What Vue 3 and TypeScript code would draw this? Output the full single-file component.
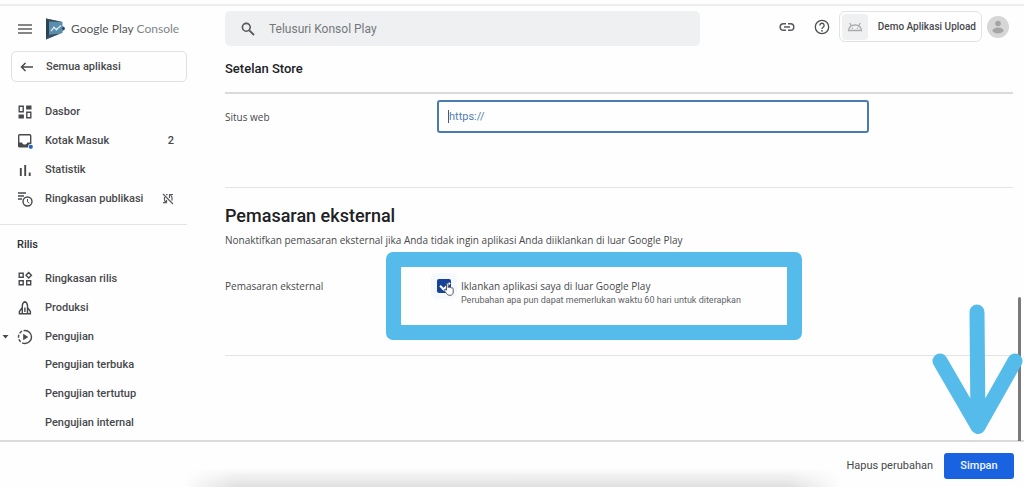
<script setup lang="ts">
import { ref } from 'vue'

interface NavItem {
  label: string
  icon?: string
  count?: number
  muted?: boolean
  open?: boolean
}

const overview: NavItem[] = [
  { label: 'Dasbor', icon: 'dashboard' },
  { label: 'Kotak Masuk', icon: 'inbox', count: 2 },
  { label: 'Statistik', icon: 'stats' },
  { label: 'Ringkasan publikasi', icon: 'publish', muted: true },
]

const release: NavItem[] = [
  { label: 'Ringkasan rilis', icon: 'widgets' },
  { label: 'Produksi', icon: 'production' },
  { label: 'Pengujian', icon: 'testing', open: true },
  { label: 'Pengujian terbuka' },
  { label: 'Pengujian tertutup' },
  { label: 'Pengujian internal' },
]

const query = ref('')
const website = ref('')
const advertise = ref(true)
</script>

<template>
  <div class="page">
    <div class="shell">
      <aside class="sidebar">
        <div class="brand">
          <button class="icon-button" type="button" aria-label="Menu">
            <svg width="14" height="12" viewBox="0 0 14 12"><path d="M0 2h14M0 6h14M0 10h14" stroke="#5c5f62" stroke-width="1.5" /></svg>
          </button>
          <svg width="20" height="22" viewBox="0 0 20 22" aria-hidden="true">
            <path d="M1 0.5L19.5 9v3L1 21.5z" fill="#4d7f9e" />
            <path d="M1 0.5L17.5 4v11L3 17z" fill="#5b8eac" />
            <path d="M1 0.5L4 3v14l-3 4.500z" fill="#2d4350" />
            <path d="M1 21.5L4 17l13-2z" fill="#34505f" />
            <path d="M1 0.5L17.5 4 4 3.500z" fill="#354b58" />
            <path d="M6 13l3-3.500 2.500 2L16 7.500" fill="none" stroke="#d9edf8" stroke-width="1.200" />
            <circle cx="9" cy="9.500" r="1" fill="#d9edf8" /><circle cx="11.500" cy="11.500" r="1" fill="#d9edf8" />
            <circle cx="18.500" cy="10.500" r="1.200" fill="#263b48" />
          </svg>
          <span class="brand-name">Google Play <span>Console</span></span>
        </div>

        <button class="all-apps" type="button">
          <svg width="14" height="12" viewBox="0 0 14 12"><path d="M13 6H1.500M5.500 2l-4 4 4 4" fill="none" stroke="#47494c" stroke-width="1.500" /></svg>
          <span>Semua aplikasi</span>
        </button>

        <nav class="nav">
          <ul class="list overview">
            <li v-for="item in overview" :key="item.label">
              <a class="item" href="#">
                <span class="glyph">
                  <svg v-if="item.icon === 'dashboard'" width="16" height="16" viewBox="0 0 16 16">
                    <path d="M2.200 2.200h4v5.600h-4zM9.800 8.200h4v5.600h-4z" fill="none" stroke="#47494c" stroke-width="1.400" />
                    <path d="M9.100 1.500h5.400v4H9.100zM1.500 10.500h5.400v4H1.500z" fill="#47494c" />
                  </svg>
                  <svg v-else-if="item.icon === 'inbox'" width="16" height="16" viewBox="0 0 16 16">
                    <rect x="1.700" y="1.700" width="12" height="12" rx="1" fill="none" stroke="#47494c" stroke-width="1.400" />
                    <path d="M1.500 9.500h3.500c.5 1.500 1.500 2 2.700 2s2.200-.5 2.700-2h3.500v4.500H1.500z" fill="#47494c" />
                    <circle cx="13.700" cy="13.700" r="2.600" fill="#fefefe" /><circle cx="13.800" cy="13.800" r="2.100" fill="#2065c4" />
                  </svg>
                  <svg v-else-if="item.icon === 'stats'" width="16" height="16" viewBox="0 0 16 16">
                    <path d="M3.800 6v8M8.200 3v11M12.700 10.500V14" stroke="#47494c" stroke-width="1.900" />
                  </svg>
                  <svg v-else width="16" height="16" viewBox="0 0 16 16">
                    <path d="M1 2h8M1 5h6M1 8h4" stroke="#47494c" stroke-width="1.300" />
                    <circle cx="10.500" cy="10.500" r="4.500" fill="none" stroke="#47494c" stroke-width="1.400" />
                    <path d="M10.500 8v2.700l1.700 1.500" fill="none" stroke="#47494c" stroke-width="1" />
                  </svg>
                </span>
                <span class="text">{{ item.label }}</span>
                <span v-if="item.count" class="count">{{ item.count }}</span>
                <svg v-if="item.muted" class="muted" width="12" height="12" viewBox="0 0 12 12">
                  <path d="M1 1l10 10M4 1.700h1.500M2.500 4v3c0 1.500 1 2 2 2.500M1 9.700h3.500V7M7.500 5V1.500H11M8.500 2c1.200.7 1.500 1.500 1.500 3v2.500" fill="none" stroke="#5a5c5f" stroke-width="1.200" />
                </svg>
              </a>
            </li>
          </ul>
          <h3>Rilis</h3>
          <ul class="list release">
            <li v-for="item in release" :key="item.label">
              <a class="item" href="#">
                <svg v-if="item.open" class="caret" width="8" height="4" viewBox="0 0 8 4"><path d="M0.500 0h6L3.500 3.500z" fill="#47494c" /></svg>
                <span class="glyph">
                  <svg v-if="item.icon === 'widgets'" width="16" height="16" viewBox="0 0 16 16">
                    <path d="M2.200 2.200h4v4h-4zM2.200 9.700h4v4h-4zM9.700 9.700h4v4h-4zM11.700 1.500l2.700 2.700-2.700 2.700L9 4.200z" fill="none" stroke="#47494c" stroke-width="1.400" />
                  </svg>
                  <svg v-else-if="item.icon === 'production'" width="16" height="16" viewBox="0 0 16 16">
                    <path d="M5.300 13.500V6c0-2 1-3.500 2.600-4.300C9.500 2.500 10.500 4 10.500 6v7.500M5.300 7.500l-2.900 4v2.200h11v-2.200l-2.900-4M7.900 7.500v4.500" fill="none" stroke="#47494c" stroke-width="1.400" />
                  </svg>
                  <svg v-else-if="item.icon === 'testing'" width="16" height="16" viewBox="0 0 16 16">
                    <path d="M8 1.500a6.500 6.500 0 0 1 0 13" fill="none" stroke="#47494c" stroke-width="1.400" />
                    <path d="M8 14.500a6.500 6.500 0 0 1 0-13" fill="none" stroke="#47494c" stroke-width="1.400" stroke-dasharray="3 1.600" />
                    <path d="M6.200 4.800l5 3.200-5 3.200z" fill="#47494c" />
                  </svg>
                </span>
                <span class="text">{{ item.label }}</span>
              </a>
            </li>
          </ul>
        </nav>
      </aside>

      <main class="main">
        <header class="topbar">
          <label class="search">
            <svg width="14" height="14" viewBox="0 0 14 14" aria-hidden="true"><circle cx="5.300" cy="5.300" r="3.900" fill="none" stroke="#55585b" stroke-width="1.600" /><path d="M8.300 8.300l4.700 4.700" stroke="#55585b" stroke-width="1.800" /></svg>
            <input v-model="query" type="search" placeholder="Telusuri Konsol Play" aria-label="Telusuri Konsol Play" />
          </label>
          <div class="tools">
            <button class="icon-button" type="button" aria-label="Tautan">
              <svg width="16" height="16" viewBox="0 0 16 16"><path d="M7 4.700H4.500a3.300 3.300 0 0 0 0 6.600H7M9 4.700h2.500a3.300 3.300 0 0 1 0 6.600H9M5 8h6" fill="none" stroke="#55585b" stroke-width="1.500" /></svg>
            </button>
            <button class="icon-button help" type="button" aria-label="Bantuan">
              <svg width="16" height="16" viewBox="0 0 16 16"><circle cx="8" cy="8" r="6.700" fill="none" stroke="#4c4f52" stroke-width="1.300" /><path d="M5.900 6.500a2.100 2.100 0 1 1 3.400 1.500C8.500 8.600 8 9 8 9.900" fill="none" stroke="#4c4f52" stroke-width="1.300" /><circle cx="8" cy="11.800" r=".9" fill="#4c4f52" /></svg>
            </button>
            <button class="app-chip" type="button">
              <span class="app-icon">
                <svg width="16" height="12" viewBox="0 0 16 12"><path d="M1.500 9.500c.5-3.500 3-5.500 6.500-5.500s6 2 6.500 5.500zM4.500 5L2.700 2M11.500 5l1.800-3" fill="none" stroke="#a9acaf" stroke-width="1.300" /><circle cx="5.500" cy="7.300" r=".7" fill="#a9acaf" /><circle cx="10.500" cy="7.300" r=".7" fill="#a9acaf" /></svg>
              </span>
              <span>Demo Aplikasi Upload</span>
            </button>
            <button class="icon-button" type="button" aria-label="Akun">
              <svg width="22" height="22" viewBox="0 0 22 22"><circle cx="11" cy="11" r="11" fill="#d6d6d6" /><circle cx="11" cy="7.500" r="2.800" fill="#a5a5a5" /><ellipse cx="11" cy="14.500" rx="5.500" ry="3" fill="#a5a5a5" /></svg>
            </button>
          </div>
        </header>

        <h1>Setelan Store</h1>

        <section class="row website">
          <label for="website">Situs web</label>
          <input id="website" v-model="website" type="url" placeholder="https://" />
          <span class="insertion" aria-hidden="true"></span>
        </section>

        <section class="marketing">
          <h2>Pemasaran eksternal</h2>
          <p>Nonaktifkan pemasaran eksternal jika Anda tidak ingin aplikasi Anda diiklankan di luar Google Play</p>
          <div class="row">
            <span class="row-label">Pemasaran eksternal</span>
            <div class="option">
              <input id="advertise" v-model="advertise" type="checkbox" aria-describedby="advertise-note" />
              <div class="option-text">
                <label for="advertise">Iklankan aplikasi saya di luar Google Play</label>
                <small id="advertise-note">Perubahan apa pun dapat memerlukan waktu 60 hari untuk diterapkan</small>
              </div>
              <svg class="pointer" width="12" height="14" viewBox="0 0 12 14" aria-hidden="true">
                <path d="M3.500 8V2c0-1.300 1.700-1.300 1.700 0v3.500c.3-.8 1.600-.7 1.700.2.400-.6 1.500-.4 1.600.4.500-.5 1.700-.2 1.700.8V10c0 2-1 3.300-3.200 3.300-2 0-2.800-.8-3.600-2L1.200 8.700c-.5-1 .6-1.600 1.300-.9z" fill="#fff" stroke="#444b55" stroke-width=".9" />
              </svg>
              <span class="highlight" aria-hidden="true"></span>
            </div>
          </div>
        </section>
      </main>
    </div>

    <footer class="actions">
      <span class="scrollbar" aria-hidden="true"></span>
      <button class="discard" type="button">Hapus perubahan</button>
      <button class="save" type="button">Simpan</button>
      <svg class="arrow" width="92" height="132" viewBox="0 0 92 132" aria-hidden="true">
        <path d="M45 8L46 122M8 57L46 122.500 83 57" fill="none" stroke="#55bbea" stroke-width="15" stroke-linecap="round" stroke-linejoin="round" />
      </svg>
    </footer>
  </div>
</template>

<style>
body {
  margin: 0;
  background: #fefefe;
}
</style>

<style scoped>
* {
  box-sizing: border-box;
}

.page {
  display: flex;
  flex-direction: column;
  min-height: 100vh;
  border-top: 1px solid #fefefe;
  color: #47494c;
  font: 11px/14px Roboto, "Open Sans", sans-serif;
}

.page::before {
  content: "";
  height: 2px;
  margin-top: 3px;
  background: #ececec;
}

button,
input {
  font: inherit;
  color: inherit;
}

button {
  padding: 0;
  border: 0;
  background: none;
  cursor: pointer;
}

.icon-button {
  display: flex;
}

h1,
h2,
h3,
p,
ul {
  margin: 0;
  padding: 0;
}

.shell {
  flex: 1;
  display: grid;
  grid-template-columns: 187px minmax(0, 1fr);
  column-gap: 38px;
}

.brand {
  display: flex;
  align-items: center;
  height: 45px;
  padding-left: 18px;
}

.brand > svg {
  flex: none;
  margin: 0 6px 0 13px;
}

.brand-name {
  font: 12px/16px Lato, sans-serif;
  color: #55585b;
  white-space: nowrap;
}

.brand-name span {
  color: #80858a;
}

.all-apps {
  display: flex;
  align-items: center;
  gap: 12px;
  width: 176px;
  height: 31px;
  margin-left: 11px;
  padding-left: 8px;
  border: 1px solid #dfe1e3;
  border-radius: 5px;
  font-weight: 500;
}

.nav {
  margin-top: 16px;
}

.list {
  display: flex;
  flex-direction: column;
  list-style: none;
}

.list li {
  flex: 1;
  display: flex;
}

.overview {
  height: 115px;
}

.release {
  height: 172px;
}

.item {
  position: relative;
  flex: 1;
  display: flex;
  align-items: center;
  padding: 0 13px 0 17px;
  color: inherit;
  font-weight: 500;
  text-decoration: none;
}

.glyph {
  display: flex;
  width: 28px;
}

.text {
  flex: 1;
  white-space: nowrap;
}

.muted {
  flex: none;
}

.caret {
  position: absolute;
  left: 2px;
}

h3 {
  margin-top: 11px;
  padding: 13px 0 13px 17px;
  border-top: 1px solid #e3e4e6;
  color: #2c2e31;
  font-size: 11px;
  line-height: 14px;
  font-weight: 500;
}

.main {
  padding-right: 11px;
}

.topbar {
  display: flex;
  justify-content: space-between;
  align-items: flex-start;
  gap: 16px;
  padding: 5px 4px 0 0;
}

.search {
  flex: 0 1 475px;
  display: flex;
  align-items: center;
  gap: 14px;
  height: 35px;
  padding: 0 16px;
  border-radius: 5px;
  background: #eff0f1;
}

.search input {
  flex: 1;
  min-width: 0;
  padding: 0;
  border: 0;
  outline: 0;
  background: none;
  font-size: 12px;
}

.search input::placeholder {
  color: #75787b;
  opacity: 1;
}

.tools {
  display: flex;
  align-items: center;
  gap: 5px;
}

.help {
  margin: 0 4px 0 14px;
}

.app-chip {
  display: flex;
  align-items: center;
  gap: 10px;
  height: 31px;
  padding: 0 5px 0 2px;
  border: 1px solid #e2e3e4;
  border-radius: 6px;
  font-size: 10px;
  font-weight: 500;
  white-space: nowrap;
}

.app-icon {
  display: grid;
  place-items: center;
  width: 26px;
  height: 26px;
  border-radius: 4px;
  background: #eff0f1;
}

h1 {
  padding: 14px 0;
  border-bottom: 2px solid #d9dadb;
  color: #202124;
  font-size: 13px;
  line-height: 18px;
  font-weight: 500;
}

.row {
  position: relative;
  display: grid;
  grid-template-columns: 212px minmax(0, 1fr);
}

.website {
  align-items: start;
  height: 93px;
  padding-top: 6px;
}

.website label {
  padding-top: 10px;
}

.website input {
  width: 100%;
  max-width: 432px;
  height: 33px;
  padding: 0 10px;
  border: 2px solid #4a7cb4;
  border-radius: 3px;
  outline: 0;
  background: #fefefe;
}

.website input::placeholder {
  color: #5280b0;
  opacity: 1;
}

.insertion {
  position: absolute;
  top: 16px;
  left: 223px;
  width: 1px;
  height: 13px;
  background: #3c5f86;
}

.marketing {
  height: 169px;
  padding-top: 16px;
  border-top: 1px solid #e3e4e6;
  border-bottom: 1px solid #e3e4e6;
}

h2 {
  color: #202124;
  font-size: 18px;
  line-height: 24px;
  font-weight: 500;
}

p,
.website label,
.row-label,
.option label {
  font: 10px/14px "Open Sans", sans-serif;
}

p {
  margin-top: 5px;
}

.marketing .row {
  margin-top: 32px;
}

.option {
  position: relative;
  display: flex;
  gap: 10px;
}

.option input {
  appearance: none;
  width: 14px;
  height: 14px;
  margin: 0;
  border-radius: 2px;
  background: #17429b;
  box-shadow: 0 0 0 6px #f5f8fd;
}

.option input:checked::before {
  content: "";
  display: block;
  width: 4px;
  height: 8px;
  margin: 1px 5px;
  border: solid #fff;
  border-width: 0 2px 2px 0;
  rotate: 45deg;
}

.option-text {
  display: grid;
}

.option-text small {
  font-size: 9px;
  line-height: 14px;
  color: #606366;
}

.pointer {
  position: absolute;
  top: 3px;
  left: 6px;
}

.highlight {
  position: absolute;
  top: -27px;
  left: -51px;
  width: 416px;
  height: 88px;
  border-radius: 7px;
  border: 15px solid #55bbea;
  pointer-events: none;
}

.actions {
  position: relative;
  display: flex;
  justify-content: flex-end;
  align-items: center;
  gap: 11px;
  height: 47px;
  padding: 2px 10px 0;
  border-top: 2px solid #d9dadb;
  font-weight: 500;
}

.actions::before {
  content: "";
  position: absolute;
  left: 18%;
  right: 18%;
  bottom: 0;
  height: 19px;
  background: linear-gradient(transparent, #dfdfdf);
  mask-image: linear-gradient(90deg, transparent, #000 8%, #000 92%, transparent);
}

.discard {
  font-weight: 400;
}

.save {
  width: 70px;
  height: 26px;
  border-radius: 3px;
  background: #1a63e0;
  color: #f2f6ff;
}

.scrollbar {
  position: absolute;
  right: 3px;
  bottom: 46px;
  width: 3px;
  height: 144px;
  border-radius: 2px 2px 0 0;
  background: #77797b;
}

.arrow {
  position: absolute;
  right: 0;
  bottom: 51px;
  pointer-events: none;
}
</style>
